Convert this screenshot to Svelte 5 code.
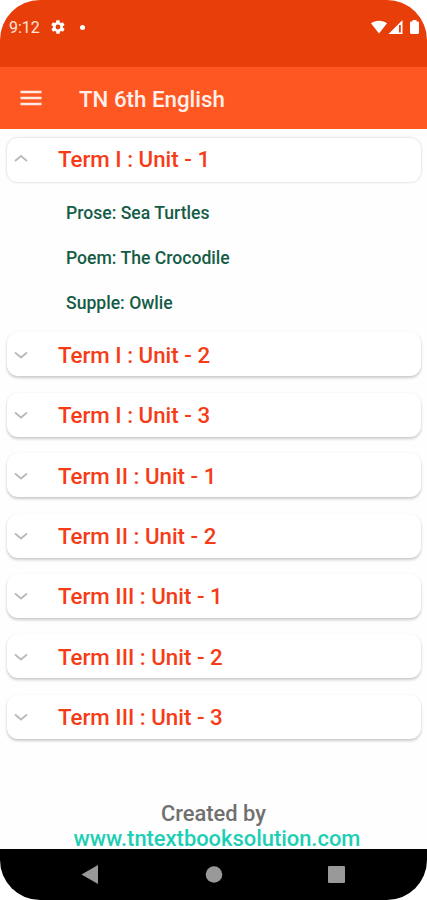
<script>
    let units = $state([
        {
            title: 'Term I : Unit - 1',
            open: true,
            lessons: ['Prose: Sea Turtles', 'Poem: The Crocodile', 'Supple: Owlie'],
        },
        { title: 'Term I : Unit - 2', open: false, lessons: [] },
        { title: 'Term I : Unit - 3', open: false, lessons: [] },
        { title: 'Term II : Unit - 1', open: false, lessons: [] },
        { title: 'Term II : Unit - 2', open: false, lessons: [] },
        { title: 'Term III : Unit - 1', open: false, lessons: [] },
        { title: 'Term III : Unit - 2', open: false, lessons: [] },
        { title: 'Term III : Unit - 3', open: false, lessons: [] },
    ]);
</script>

<div class="screen">
    <div class="status">
        <span class="time">9:12</span>
        <svg class="gear" width="16" height="16" viewBox="0 0 24 24">
            <path
                fill="#fff"
                fill-rule="evenodd"
                d="M19.4 13c0-.3.1-.6.1-1s0-.7-.1-1l2.1-1.6c.2-.2.3-.4.1-.7l-2-3.4c-.1-.2-.4-.3-.6-.2l-2.5 1c-.5-.4-1.1-.7-1.7-1l-.4-2.6c0-.3-.2-.5-.5-.5h-4c-.2 0-.4.2-.5.4l-.4 2.7c-.6.2-1.1.6-1.7 1l-2.5-1c-.2-.1-.5 0-.6.2l-2 3.4c-.1.3-.1.5.1.7L4.5 11c0 .3-.1.6-.1 1s0 .7.1 1l-2.1 1.6c-.2.2-.3.5-.1.7l2 3.4c.1.2.4.3.6.2l2.5-1c.5.4 1.1.7 1.7 1l.4 2.7c0 .2.2.4.5.4h4c.3 0 .5-.2.5-.4l.4-2.7c.6-.3 1.2-.6 1.7-1l2.5 1c.2.1.5 0 .6-.2l2-3.4c.1-.2.1-.5-.1-.7zM12 15.6a3.6 3.6 0 1 1 0-7.2 3.6 3.6 0 0 1 0 7.2z"
            />
        </svg>
        <span class="dot"></span>
        <svg class="signals" width="50" height="16" viewBox="0 0 50 16">
            <path fill="#fff" d="M1 4.3C5 .8 13 .8 17 4.3L9 14.5z" />
            <path fill="#fff" fill-rule="evenodd" d="M32.5 1V15H18.500zM30.8 6H29v7.500h1.800z" />
            <path
                fill="#fff"
                d="M42.5 1h4v1.4h1.2c.8 0 1.3.5 1.3 1.2v10.2c0 .7-.5 1.2-1.3 1.2h-6.4c-.8 0-1.3-.5-1.3-1.2V3.6c0-.7.5-1.2 1.3-1.2h1.2z"
            />
        </svg>
    </div>

    <header>
        <svg width="22" height="16" viewBox="0 0 22 16">
            <path stroke="#ffe9e2" stroke-width="2.5" d="M.5 2h21M.5 8h21M.5 14h21" />
        </svg>
        <h1>TN 6th English</h1>
    </header>

    <main>
        {#each units as unit}
            <button class="card" class:open={unit.open} onclick={() => (unit.open = !unit.open)}>
                <svg width="14" height="8" viewBox="0 0 14 8">
                    <path
                        fill="none"
                        stroke="#b9b9b9"
                        stroke-width="1.8"
                        d={unit.open ? 'M1 6l6-5 6 5' : 'M1 1.5l6 5 6-5'}
                    />
                </svg>
                <span>{unit.title}</span>
            </button>
            {#if unit.open}
                <ul>
                    {#each unit.lessons as lesson}
                        <li>{lesson}</li>
                    {/each}
                </ul>
            {/if}
        {/each}
    </main>

    <footer>
        <div>Created by</div>
        <div class="site">www.tntextbooksolution.com</div>
    </footer>

    <nav>
        <svg width="427" height="51" viewBox="0 0 427 51">
            <path fill="#999" d="M81.5 25.5L98 16v19z" />
            <circle cx="214" cy="25.5" r="8.3" fill="#999" />
            <rect x="328" y="17" width="17" height="17" rx="1" fill="#999" />
        </svg>
    </nav>
</div>

<style>
    :global(body) {
        background: #fff;
    }
    .screen {
        width: 427px;
        height: 900px;
        display: flex;
        flex-direction: column;
        overflow: hidden;
        border-radius: 40px;
        background: #fefefe;
        font-family: Roboto, sans-serif;
        font-weight: 500;
    }
    .status {
        height: 67px;
        flex: none;
        box-sizing: border-box;
        padding: 18px 7px 0 9px;
        display: flex;
        align-items: flex-start;
        background: #e83e09;
        color: #ffe4db;
    }
    .time {
        width: 41px;
        font-size: 16px;
        font-weight: 400;
        line-height: 20px;
    }
    .gear {
        margin-top: 1px;
    }
    .dot {
        width: 5px;
        height: 5px;
        margin: 7px 0 0 14px;
        border-radius: 50%;
        background: #fff;
    }
    .signals {
        margin: 1px 0 0 auto;
    }

    header {
        height: 61.5px;
        flex: none;
        box-sizing: border-box;
        padding: 0 0 0 20px;
        display: flex;
        align-items: center;
        gap: 37px;
        background: #ff5722;
    }
    h1 {
        margin: 3px 0 0;
        color: #fff0eb;
        font-size: 22.3px;
        font-weight: 500;
        line-height: 26px;
    }

    main {
        flex: 1;
        padding: 9.5px 6px 0 7px;
    }
    .card {
        width: 100%;
        height: 44px;
        margin: 0 0 16.4px;
        padding: 1px 0 0 7px;
        display: flex;
        align-items: center;
        gap: 37px;
        border: none;
        border-radius: 11px;
        background: #fff;
        box-shadow:
            0 2px 3px rgba(0, 0, 0, 0.2),
            0 0 2px rgba(0, 0, 0, 0.06);
        color: #f63c17;
        font: 500 22.3px/26px Roboto, sans-serif;
        text-align: left;
        cursor: pointer;
    }
    .card.open {
        margin-bottom: 9px;
        padding: 0 0 2px 7px;
        box-shadow: 0 0 2px 1px rgba(0, 0, 0, 0.1);
    }
    .card span {
        margin-left: -7px;
    }

    ul {
        margin: 0;
        padding: 0 0 6.4px 59px;
        list-style: none;
    }
    li {
        height: 45px;
        color: #155c46;
        font-size: 17.6px;
        line-height: 45px;
    }

    footer {
        height: 48px;
        flex: none;
        color: #707070;
        font-size: 21.9px;
        line-height: 25px;
        text-align: center;
    }
    .site {
        padding-left: 7px;
        color: #1dcfb4;
    }

    nav {
        height: 51px;
        flex: none;
        background: #000;
    }
    nav svg {
        display: block;
    }
</style>
